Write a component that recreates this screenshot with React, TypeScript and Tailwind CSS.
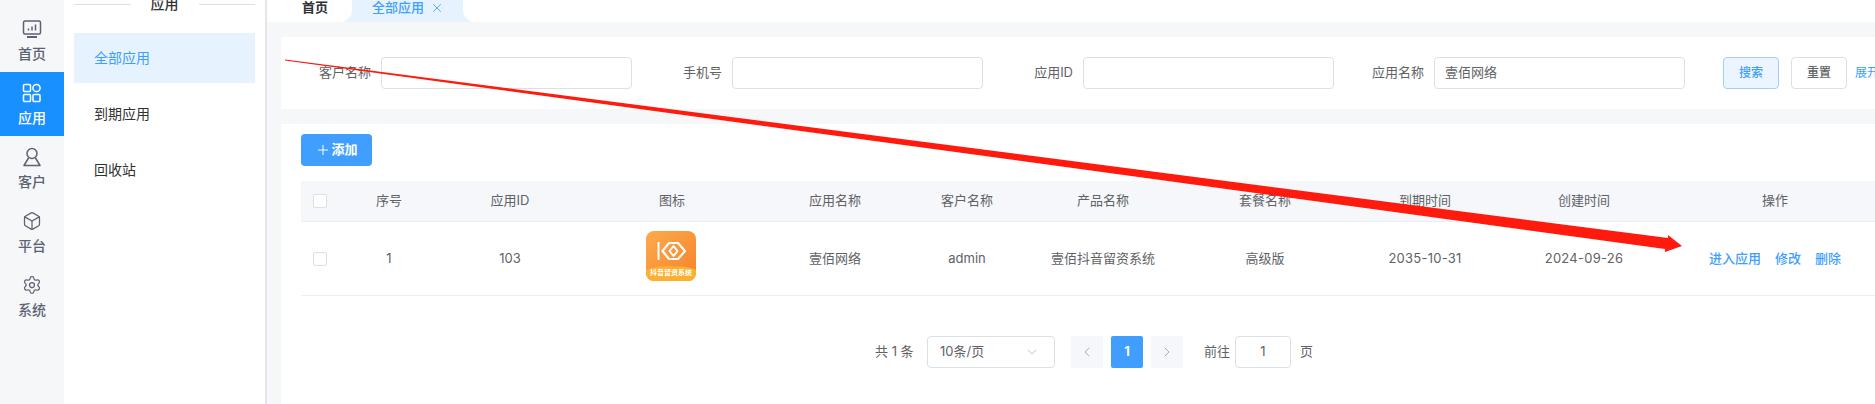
import { Box, ChevronDown, ChevronLeft, ChevronRight, Plus, Settings, X } from "lucide-react";

const iconClass = "w-5 h-5";

function HomeIcon() {
  return (
    <svg className={iconClass} viewBox="0 0 20 20" fill="none" stroke="currentColor" strokeWidth={1.5}>
      <rect x="1.5" y="2" width="17" height="13" rx="1.5" />
      <path d="M5 18h10" strokeWidth={2} />
      <path d="M6.5 11.5V9.5M10 11.5V7.5M13.5 11.5V5.5" />
    </svg>
  );
}

function AppsIcon() {
  return (
    <svg className={iconClass} viewBox="0 0 20 20" fill="none" stroke="currentColor" strokeWidth={1.5}>
      <rect x="1.5" y="1.5" width="7" height="7" rx="1" />
      <circle cx="14.5" cy="5" r="3.6" />
      <rect x="1.5" y="11.5" width="7" height="7" rx="1" />
      <rect x="11" y="11.5" width="7" height="7" rx="1" />
    </svg>
  );
}

function UserIcon() {
  return (
    <svg className={iconClass} viewBox="0 0 20 20" fill="none" stroke="currentColor" strokeWidth={1.5}>
      <circle cx="10" cy="6.5" r="5" />
      <path d="M6.5 11 2 18.5h16L13.5 11" strokeLinejoin="round" />
    </svg>
  );
}

const railItems = [
  { label: "首页", icon: <HomeIcon /> },
  { label: "应用", icon: <AppsIcon />, active: true },
  { label: "客户", icon: <UserIcon /> },
  { label: "平台", icon: <Box className={iconClass} strokeWidth={1.5} /> },
  { label: "系统", icon: <Settings className={iconClass} strokeWidth={1.5} /> },
];

const filters = [
  { label: "客户名称", value: "" },
  { label: "手机号", value: "" },
  { label: "应用ID", value: "" },
  { label: "应用名称", value: "壹佰网络" },
];

const gridCols = "grid grid-cols-[39px_98px_144px_180px_146px_118px_154px_170px_150px_168px_214px] w-[1581px]";
const headers = ["序号", "应用ID", "图标", "应用名称", "客户名称", "产品名称", "套餐名称", "到期时间", "创建时间", "操作"];

function Checkbox() {
  return <span className="block w-[14px] h-[14px] ml-3 bg-white border border-[#dcdfe6] rounded-[2px]" />;
}

function AppLogo() {
  return (
    <div className="relative w-[50px] h-[50px] rounded-lg overflow-hidden bg-gradient-to-br from-[#fdaa4c] to-[#f5822a]">
      <svg className="absolute left-[11px] top-[10px] w-[30px] h-[20px]" viewBox="0 0 30 20" fill="none" stroke="#fff">
        <path d="M1.5 1v18" strokeWidth={2} />
        <path d="M12 2 5.5 10l6.5 8h9l7-8-7-8z" strokeWidth={2.2} strokeLinejoin="round" />
        <path d="M16.5 5 12.5 10l4 5 4-5z" strokeWidth={2} strokeLinejoin="round" />
      </svg>
      <div className="absolute left-[-4px] right-[-4px] bottom-0 h-[15px] rounded-t-[50%] bg-[#fbb02f] flex items-center justify-center text-[7px] font-bold text-white whitespace-nowrap">
        抖音留资系统
      </div>
    </div>
  );
}

export default function App() {
  return (
    <div className="relative flex w-[1875px] h-[404px] overflow-hidden bg-white font-['Inter','Noto_Sans_CJK_SC',sans-serif] text-[13px] text-[#606266]">
      {/* left rail */}
      <aside className="w-16 shrink-0 pt-2 bg-[#f6f7f9] text-[#5b6272]">
        {railItems.map((item) => (
          <div
            key={item.label}
            className={`h-16 flex flex-col items-center pt-[11px] ${item.active ? "bg-[#1890ff] text-white" : ""}`}
          >
            {item.icon}
            <span className="mt-[5px] text-sm leading-5 font-medium">{item.label}</span>
          </div>
        ))}
      </aside>

      {/* sub menu */}
      <aside className="w-[203px] shrink-0 px-[10px] border-r-2 border-[#e3e5ea] text-sm text-[#303133]">
        <div className="flex items-center h-5 -mt-[6px] gap-5 font-medium">
          <span className="flex-1 h-px bg-[#dcdfe6]" />
          应用
          <span className="flex-1 h-px bg-[#dcdfe6]" />
        </div>
        <div className="mt-[19px] w-[181px] flex flex-col gap-[6px]">
          <div className="h-[50px] flex items-center pl-5 bg-[#e6f3ff] text-[#409eff]">全部应用</div>
          <div className="h-[50px] flex items-center pl-5">到期应用</div>
          <div className="h-[50px] flex items-center pl-5">回收站</div>
        </div>
      </aside>

      <main className="flex-1 min-w-0 flex flex-col">
        {/* tabs */}
        <div className="flex h-[22px] shrink-0 bg-[#e6f3ff]">
          <div className="w-[85px] pl-[35px] pb-[6px] bg-white rounded-br-xl flex items-center font-semibold text-[#303133]">
            首页
          </div>
          <div className="w-[111px] pl-5 pb-[6px] flex items-center gap-[6px] font-medium text-[#409eff]">
            全部应用
            <X className="w-[14px] h-[14px]" strokeWidth={1.5} />
          </div>
          <div className="flex-1 bg-white rounded-bl-xl" />
        </div>

        <div className="flex-1 pl-[14px] pt-[15px] bg-[#f6f7f9] flex flex-col gap-[15px]">
          {/* filters */}
          <div className="h-[72px] shrink-0 flex items-center bg-white whitespace-nowrap">
            {filters.map((f) => (
              <div key={f.label} className="w-[351px] shrink-0 flex items-center">
                <label className="w-[90px] text-right">{f.label}</label>
                <div className="ml-[10px] w-[251px] h-8 pl-[10px] flex items-center bg-white border border-[#dcdfe6] rounded-[4px]">
                  {f.value}
                </div>
              </div>
            ))}
            <div className="ml-[38px] w-14 h-8 shrink-0 flex items-center justify-center text-xs font-medium bg-[#ecf5ff] border border-[#a0cfff] rounded-[4px] text-[#409eff]">
              搜索
            </div>
            <div className="ml-3 w-14 h-8 shrink-0 flex items-center justify-center text-xs font-medium border border-[#dcdfe6] rounded-[4px]">
              重置
            </div>
            <span className="ml-2 text-xs text-[#409eff]">展开</span>
          </div>

          {/* table card */}
          <div className="flex-1 pl-5 pt-[10px] bg-white overflow-hidden">
            <div className="w-[71px] h-8 flex items-center justify-center bg-[#409eff] rounded-[4px] text-white font-semibold">
              <Plus className="w-4 h-4" strokeWidth={1.5} />
              添加
            </div>

            <div className="mt-[15px] w-[1581px]">
              <div className={`${gridCols} h-[41px] items-center text-center bg-[#f5f7fa] border-b border-[#ebeef5]`}>
                <Checkbox />
                {headers.map((h) => (
                  <div key={h}>{h}</div>
                ))}
              </div>
              <div className={`${gridCols} h-[74px] items-center text-center border-b border-[#ebeef5]`}>
                <Checkbox />
                <div>1</div>
                <div>103</div>
                <div className="flex justify-center pr-[2px] pb-[6px]">
                  <AppLogo />
                </div>
                <div>壹佰网络</div>
                <div>admin</div>
                <div>壹佰抖音留资系统</div>
                <div>高级版</div>
                <div className="tracking-[0.25px]">2035-10-31</div>
                <div className="tracking-[0.25px]">2024-09-26</div>
                <div className="flex justify-center gap-[14px] font-medium text-[#409eff]">
                  <span>进入应用</span>
                  <span>修改</span>
                  <span>删除</span>
                </div>
              </div>
            </div>

            {/* pagination */}
            <div className="mt-10 ml-[574px] flex items-center h-8 whitespace-nowrap">
              <span className="w-[52px]">共 1 条</span>
              <div className="w-32 h-8 flex items-center justify-between pl-3 pr-[14px] border border-[#dcdfe6] rounded-[4px]">
                10条/页
                <ChevronDown className="w-4 h-4 text-[#c0c4cc]" strokeWidth={1.5} />
              </div>
              <div className="ml-4 w-8 h-8 flex items-center justify-center bg-[#f5f7fa] rounded-[2px] text-[#a8abb2]">
                <ChevronLeft className="w-4 h-4" strokeWidth={1.5} />
              </div>
              <div className="ml-2 w-8 h-8 flex items-center justify-center bg-[#409eff] rounded-[2px] text-white font-bold">
                1
              </div>
              <div className="ml-2 w-8 h-8 flex items-center justify-center bg-[#f5f7fa] rounded-[2px] text-[#a8abb2]">
                <ChevronRight className="w-4 h-4" strokeWidth={1.5} />
              </div>
              <span className="ml-[21px]">前往</span>
              <div className="ml-[5px] w-14 h-8 flex items-center justify-center border border-[#dcdfe6] rounded-[4px]">1</div>
              <span className="ml-[9px]">页</span>
            </div>
          </div>
        </div>
      </main>

      {/* red annotation arrow */}
      <svg className="absolute inset-0 pointer-events-none" width="1875" height="404" viewBox="0 0 1875 404">
        <polygon points="285,59.5 285,60.5 1665,249 1665,252 1682,246 1668,235 1668,238" fill="#ff1a0e" />
      </svg>
    </div>
  );
}
